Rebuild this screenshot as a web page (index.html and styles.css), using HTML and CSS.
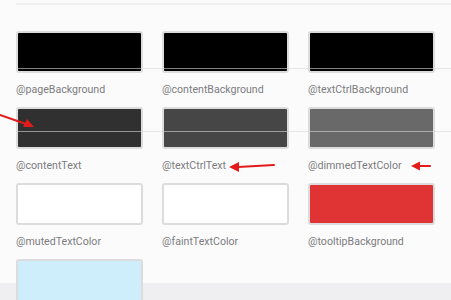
FILE: index.html
```html
<!DOCTYPE html>
<html lang="en">
<head>
    <meta charset="UTF-8">
    <meta name="viewport" content="width=device-width, initial-scale=1.0">
    <title>Theme Colors</title>
    <link rel="stylesheet" href="styles.css">
</head>
<body>
    <div class="page">
        <div class="top-rule"></div>

        <div class="swatch-grid">
            <div class="swatch-item">
                <div class="swatch" style="background-color: #000000;"></div>
                <div class="swatch-label">@pageBackground</div>
            </div>
            <div class="swatch-item">
                <div class="swatch" style="background-color: #000000;"></div>
                <div class="swatch-label">@contentBackground</div>
            </div>
            <div class="swatch-item">
                <div class="swatch" style="background-color: #000000;"></div>
                <div class="swatch-label">@textCtrlBackground</div>
            </div>

            <div class="swatch-item">
                <div class="swatch" style="background-color: #303030;"></div>
                <div class="swatch-label">@contentText</div>
            </div>
            <div class="swatch-item">
                <div class="swatch" style="background-color: #464646;"></div>
                <div class="swatch-label">@textCtrlText</div>
            </div>
            <div class="swatch-item">
                <div class="swatch" style="background-color: #696969;"></div>
                <div class="swatch-label">@dimmedTextColor</div>
            </div>

            <div class="swatch-item">
                <div class="swatch" style="background-color: #ffffff;"></div>
                <div class="swatch-label">@mutedTextColor</div>
            </div>
            <div class="swatch-item">
                <div class="swatch" style="background-color: #ffffff;"></div>
                <div class="swatch-label">@faintTextColor</div>
            </div>
            <div class="swatch-item">
                <div class="swatch" style="background-color: #e03434;"></div>
                <div class="swatch-label">@tooltipBackground</div>
            </div>

            <div class="swatch-item">
                <div class="swatch swatch-last" style="background-color: #cdeefa;"></div>
            </div>
        </div>
    </div>

    <!-- scan lines from the recording -->
    <div class="scan-line line-one"></div>
    <div class="scan-line line-two"></div>

    <!-- red annotation arrows -->
    <svg class="annotations" width="451" height="300" viewBox="0 0 451 300">
        <g stroke="#e21b1b" stroke-width="2" fill="#e21b1b" stroke-linecap="round">
            <line x1="0" y1="115" x2="26" y2="124"/>
            <polygon points="34,127 23,127 27,119" stroke="none"/>
            <line x1="274" y1="165" x2="238" y2="167"/>
            <polygon points="229,167 239,162 239,172" stroke="none"/>
            <line x1="430" y1="166" x2="419" y2="166"/>
            <polygon points="411,166 420,161.5 420,170.5" stroke="none"/>
        </g>
    </svg>
</body>
</html>
```

FILE: styles.css
```css
html {
    height: 300px;
    overflow: hidden;
}

body {
    font-family: Roboto, "Noto Sans", sans-serif;
    margin: 0;
    padding: 0;
    background-color: #efeff1;
    overflow: hidden;
    height: 300px;
    position: relative;
}

.page {
    background-color: #fbfbfc;
    height: 283px;
    padding-left: 16px;
    box-sizing: border-box;
}

.top-rule {
    height: 0;
    border-top: 2px solid #efeff1;
    position: relative;
    top: 3px;
}

.swatch-grid {
    display: grid;
    grid-template-columns: repeat(3, 127px);
    column-gap: 19px;
    row-gap: 1px;
    padding-top: 29px;
}

.swatch {
    height: 42px;
    box-sizing: border-box;
    border: 2px solid #dcdcde;
    border-radius: 3px;
}

.swatch-last {
    height: 41px;
    border-bottom: none;
    border-radius: 3px 3px 0 0;
}

.swatch-label {
    font-size: 10.6px;
    line-height: 14px;
    color: #7b7b7e;
    margin-top: 10px;
    margin-bottom: 9px;
    white-space: nowrap;
}

.scan-line {
    position: absolute;
    left: 16px;
    right: 0;
    height: 1px;
    background-color: rgba(215, 215, 215, 0.6);
}

.line-one {
    top: 68px;
}

.line-two {
    top: 131px;
}

.annotations {
    position: absolute;
    top: 0;
    left: 0;
    pointer-events: none;
}
```
